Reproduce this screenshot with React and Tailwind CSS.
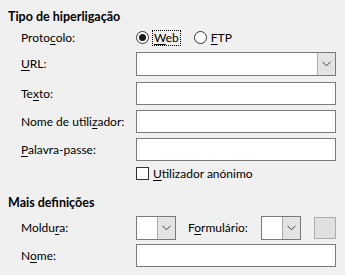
import React from "react";

const U = ({ children }) => <span className="underline underline-offset-[2px]">{children}</span>;

const Chevron = () => (
  <svg width="9" height="6" viewBox="0 0 9 6" fill="none">
    <path d="M0.5 0.8 L4.5 4.8 L8.5 0.8" stroke="#404040" strokeWidth="1" />
  </svg>
);

const TextBox = ({ className = "" }) => (
  <div className={"h-[23px] bg-white border border-[#7a7a7a] " + className} />
);

const Combo = ({ className = "", btn = "w-[18px]" }) => (
  <div className={"flex h-[24px] bg-white border border-[#7a7a7a] " + className}>
    <div className="flex-1" />
    <div className={"flex items-center justify-center bg-[#e3e3e3] border-l border-[#adadad] " + btn}>
      <Chevron />
    </div>
  </div>
);

const Row = ({ label, children, className = "" }) => (
  <div className={"flex items-center " + className}>
    <div className="w-[136px] pl-[21px] shrink-0 whitespace-nowrap">{label}</div>
    <div className="flex-1 flex items-center">{children}</div>
  </div>
);

export default function App() {
  return (
    <div
      className="w-[345px] h-[275px] bg-[#f0f0f0] text-[12px] leading-[16px] text-black overflow-hidden pr-[9px]"
      style={{ fontFamily: 'Lato, "Noto Sans", sans-serif' }}
    >
      <div className="pt-[9px] pl-[8px] h-[25px] font-bold text-[12.5px]">Tipo de hiperligação</div>
      <div className="flex items-center h-[25px]">
        <div className="w-[136px] pl-[21px] shrink-0">Proto<U>c</U>olo:</div>
        <div className="flex items-center">
          <div className="w-[13px] h-[13px] rounded-full border border-[#333] bg-white flex items-center justify-center">
            <div className="w-[7px] h-[7px] rounded-full bg-[#1a1a1a]" />
          </div>
          <span className="ml-[3px] px-[1px] border border-dotted border-black leading-[14px]"><U>W</U>eb</span>
          <div className="ml-[13px] w-[13px] h-[13px] rounded-full border border-[#333] bg-white" />
          <span className="ml-[4px]"><U>F</U>TP</span>
        </div>
      </div>
      <div className="mt-[2px]">
        <Row label={<><U>U</U>RL:</>}>
          <Combo className="flex-1" />
        </Row>
      </div>
      <Row label={<>Te<U>x</U>to:</>} className="mt-[6px]">
        <TextBox className="flex-1" />
      </Row>
      <Row label={<>Nome de utili<U>z</U>ador:</>} className="mt-[5px]">
        <TextBox className="flex-1" />
      </Row>
      <Row label={<><U>P</U>alavra-passe:</>} className="mt-[5px]">
        <TextBox className="flex-1" />
      </Row>
      <div className="mt-[6px] pl-[136px] flex items-center h-[13px]">
        <div className="w-[13px] h-[13px] border border-[#333] bg-white" />
        <span className="ml-[4px]"><U>U</U>tilizador anónimo</span>
      </div>
      <div className="mt-[15px] pl-[8px] h-[16px] font-bold text-[12.5px]">Mais definições</div>
      <Row label={<>Moldu<U>r</U>a:</>} className="mt-[5px]">
        <Combo className="w-[40px]" />
        <span className="ml-[12px] w-[73px] whitespace-nowrap">F<U>o</U>rmulário:</span>
        <Combo className="w-[40px]" />
        <div className="ml-[13px] w-[22px] h-[22px] bg-[#e0e0e0] border border-[#adadad]" />
      </Row>
      <Row label={<>N<U>o</U>me:</>} className="mt-[4px]">
        <TextBox className="flex-1" />
      </Row>
    </div>
  );
}
